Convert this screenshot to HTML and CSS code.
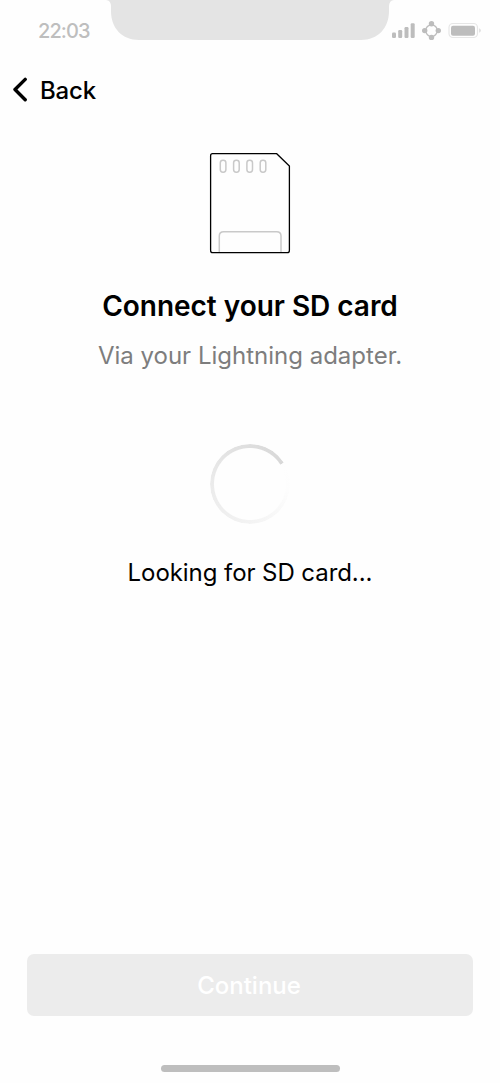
FILE: index.html
```html
<!DOCTYPE html>
<html lang="en">
<head>
<meta charset="utf-8">
<title>Connect your SD card</title>
<link rel="stylesheet" href="styles.css">
</head>
<body>
<div class="screen">
  <header class="status">
    <span class="time">22:03</span>
    <svg class="notch" width="288" height="41" viewBox="0 0 288 41"><path d="M0 0C3 .3 5 2.500 5 6V11C5 28 16 40 33 40H255C272 40 283 28 283 11V6C283 2.500 285 .3 288 0Z"/></svg>
    <svg class="indicators" width="92" height="22" viewBox="390 20 92 22">
      <g fill="#bdbdbd"><rect x="392" y="32.500" width="4" height="5.500" rx="1.200"/><rect x="398.200" y="30" width="4" height="8" rx="1.200"/><rect x="404.500" y="27" width="4" height="11" rx="1.200"/><rect x="410.700" y="23.300" width="4" height="14.700" rx="1.200"/>
      <circle cx="431.500" cy="23.800" r="2.700"/><circle cx="424.700" cy="30.600" r="2.700"/><circle cx="438.300" cy="30.600" r="2.700"/><circle cx="431.500" cy="37.400" r="2.700"/></g>
      <circle cx="431.500" cy="30.600" r="5.800" fill="none" stroke="#bdbdbd" stroke-width="1.300"/>
      <rect x="449" y="23.500" width="28.500" height="14" rx="4" fill="none" stroke="#e6e6e6" stroke-width="1.200"/>
      <rect x="451" y="25.700" width="24" height="10" rx="2" fill="#bdbdbd"/>
      <path d="M479 28.200Q481 29 481 30.500T479 32.800Z" fill="#e2e2e2"/>
    </svg>
  </header>
  <nav class="nav">
    <svg width="16" height="26" viewBox="0 0 16 26"><path d="M13.200 2.400 3 12.500 13.200 22.700" fill="none" stroke="#000" stroke-width="3.400" stroke-linecap="round" stroke-linejoin="round"/></svg>
    <span class="back">Back</span>
  </nav>
  <main class="content">
    <svg class="card" width="82" height="102" viewBox="209 152 82 102" fill="none">
      <g stroke="#c9c9c9" stroke-width="1.500"><rect x="220.300" y="160.200" width="5.600" height="12" rx="2.600"/><rect x="233.600" y="160.200" width="5.600" height="12" rx="2.600"/><rect x="246.900" y="160.200" width="5.600" height="12" rx="2.600"/><rect x="260.200" y="160.200" width="5.600" height="12" rx="2.600"/><path d="M219.300 252V236Q219.300 231.700 223.600 231.700H276.700Q281 231.700 281 236V252"/></g>
      <path d="M212.600 153.700H276.700L289.400 166V250.500Q289.400 252.700 287.200 252.700H212.800Q210.600 252.700 210.600 250.500V155.700Q210.600 153.700 212.600 153.700Z" stroke="#000" stroke-width="1.300"/>
    </svg>
    <h1 class="title">Connect your SD card</h1>
    <p class="subtitle">Via your Lightning adapter.</p>
    <div class="spinner"></div>
    <p class="message">Looking for SD card...</p>
  </main>
  <footer class="footer">
    <button class="continue" disabled>Continue</button>
    <div class="home"></div>
  </footer>
</div>
</body>
</html>
```
FILE: styles.css
```css
* { box-sizing: border-box; margin: 0; }
body { background: #fefefe; color: #000; font-family: Inter, sans-serif; }
.screen { height: 1083px; display: flex; flex-direction: column; overflow: hidden; }
.status { height: 60px; flex: none; display: flex; align-items: flex-start; padding-left: 38px; }
.time { width: 68px; flex: none; padding-top: 19px; font-size: 20px; line-height: 25px; font-weight: 500; letter-spacing: -0.9px; color: #bebebe; white-space: nowrap; }
.notch { flex: none; fill: #e4e4e4; }
.indicators { flex: none; margin-top: 20px; margin-left: -4px; }
.nav { height: 60px; flex: none; display: flex; align-items: center; padding-left: 12px; gap: 12px; }
.back { padding-top: 2px; font-size: 24px; line-height: 30px; font-weight: 500; letter-spacing: -0.15px; }
.content { flex: 1; display: flex; flex-direction: column; align-items: center; padding-top: 32px; }
.card { flex: none; }
.title { margin-top: 35px; font-size: 28px; line-height: 34px; font-weight: 600; letter-spacing: -0.03px; white-space: nowrap; }
.subtitle { margin-top: 18px; font-size: 24px; line-height: 30px; color: #7d7d7d; white-space: nowrap; }
.spinner { position: relative; flex: none; width: 80px; height: 80px; margin-top: 73px; border-radius: 50%; background: conic-gradient(#dedede 0deg, #d8d8d8 57deg, #fefefe 58deg, #fdfdfd 100deg, #f3f3f3 180deg, #ebebeb 270deg, #dedede 360deg); -webkit-mask: radial-gradient(circle, transparent 35.500px, #000 36.500px); mask: radial-gradient(circle, transparent 35.500px, #000 36.500px); }
.message { margin-top: 34px; font-size: 24px; line-height: 30px; letter-spacing: -0.07px; white-space: nowrap; }
.footer { flex: none; height: 129px; padding: 0 27px; display: flex; flex-direction: column; align-items: center; }
.continue { width: 446px; height: 62px; flex: none; border: 0; padding: 2px 2px 0 0; border-radius: 7px; background: #ececec; color: #fff; font: 500 24px/30px Inter, sans-serif; }
.home { width: 179px; height: 7px; margin-top: 49px; border-radius: 4px; background: #bebebe; }
```
